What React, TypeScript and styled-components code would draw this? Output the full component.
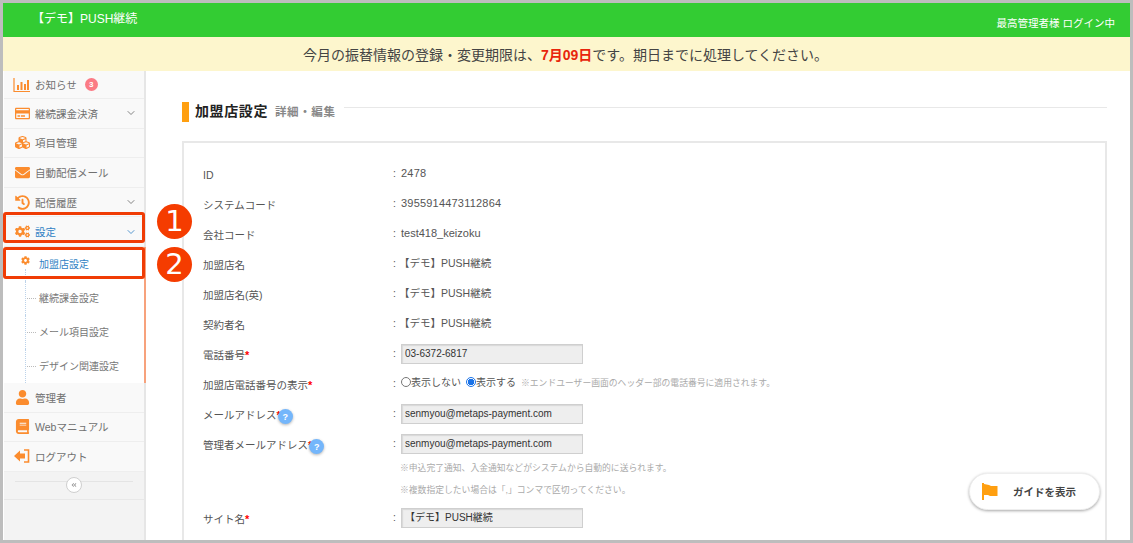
import { ReactNode } from "react";
import styled, { createGlobalStyle } from "styled-components";
import {
  FaCog,
  FaCogs,
  FaCubes,
  FaEnvelope,
  FaHistory,
  FaRegCreditCard,
  FaUser,
  FaBook,
  FaAngleDoubleLeft,
} from "react-icons/fa";
import { ChevronDown } from "lucide-react";

const GlobalStyle = createGlobalStyle`
  html, body {
    margin: 0;
    padding: 0;
    overflow: hidden;
    background: #fff;
    font-family: "Liberation Sans", "Noto Sans CJK JP", sans-serif;
  }
`;

const ChartIcon = () => (
  <svg width="18" height="16" viewBox="0 0 18 16" fill="none">
    <path d="M1 1v13.5h16" stroke="#fb8c2e" strokeWidth="1.2" />
    <path d="M4 8h2v5H4zM7.500 5h2v8h-2zM11 7h2v6h-2zM14 3h2v10h-2z" fill="#fb8c2e" />
  </svg>
);

const LogoutIcon = () => (
  <svg width="16" height="14" viewBox="0 0 16 14">
    <path d="M0 7l6-5.500V4.500h5v5H6v3z" fill="#fb8c2e" />
    <path d="M10 1h4.500v12H10" fill="none" stroke="#fb8c2e" strokeWidth="1.600" />
  </svg>
);

const FlagIcon = () => (
  <svg width="16" height="17" viewBox="0 0 16 17">
    <path d="M0 0h2v17H0z" fill="#ff9f10" />
    <path d="M2 1l5 1 2 1h6.500v10H8l-2-1H2z" fill="#ff9f10" />
  </svg>
);

const Frame = styled.div`
  position: relative;
  width: 1133px;
  height: 543px;
  box-sizing: border-box;
  border: 3px solid #bdbdbd;
  overflow: hidden;
  display: flex;
  flex-direction: column;
  background: #fff;
`;

const Header = styled.header`
  height: 34px;
  flex: none;
  background: #33cc33;
  display: flex;
  align-items: center;
  justify-content: space-between;
  padding: 0 15px 4px 29px;
  box-sizing: border-box;
  color: #fff;
`;

const Brand = styled.div`
  font-size: 12px;
  margin-top: -2px;
`;

const LoginInfo = styled.div`
  font-size: 10.500px;
  padding-top: 8px;
`;

const Notice = styled.div`
  height: 34px;
  flex: none;
  background: #fdf6cd;
  display: flex;
  align-items: center;
  justify-content: center;
  font-size: 14px;
  color: #444;
  padding-right: 2px;
  box-sizing: border-box;
  b {
    color: #e8250c;
    font-weight: 700;
  }
`;

const Body = styled.div`
  flex: 1;
  display: flex;
  min-height: 0;
`;

const Sidebar = styled.nav`
  width: 142px;
  flex: none;
  box-sizing: border-box;
  background: #f3f3f3;
  border-right: 2px solid #e6e6e6;
  margin-left: 1px;
`;

const MenuItem = styled.div<{ $h?: number; $active?: boolean }>`
  height: 29.600px;
  box-sizing: border-box;
  display: flex;
  align-items: center;
  background: #f9f9f9;
  border-bottom: 1px solid #eeeeee;
  font-size: 10.500px;
  color: ${(p) => (p.$active ? "#2f7fc4" : "#707070")};
  position: relative;
  &:first-child {
    height: 28px;
  }
`;

const MenuIcon = styled.span`
  width: 31px;
  flex: none;
  display: flex;
  justify-content: center;
  color: #fb8c2e;
  font-size: 15px;
  padding-left: 5px;
  box-sizing: border-box;
`;

const Chevron = styled.span<{ $active?: boolean }>`
  position: absolute;
  right: 7px;
  top: 50%;
  margin-top: -6px;
  height: 12px;
  color: ${(p) => (p.$active ? "#2f7fc4" : "#666")};
`;

const CountBadge = styled.span`
  width: 13px;
  height: 13px;
  border-radius: 50%;
  background: #fb7b85;
  color: #fff;
  font-size: 8px;
  font-weight: 700;
  margin-left: 8px;
  display: flex;
  align-items: center;
  justify-content: center;
`;

const SubMenu = styled.div`
  background: #fff;
  border-right: 2px solid #f7a27c;
  margin-right: -2px;
`;

const SubItem = styled.div<{ $active?: boolean }>`
  height: 34px;
  box-sizing: border-box;
  display: flex;
  align-items: center;
  padding-left: 35px;
  font-size: 10px;
  color: ${(p) => (p.$active ? "#2f7fc4" : "#777")};
  position: relative;
  &::before {
    content: "";
    position: absolute;
    left: 21px;
    top: ${(p) => (p.$active ? "22px" : "0")};
    bottom: 0;
    border-left: 1px dotted #bcd3ea;
  }
  &::after {
    content: "";
    position: absolute;
    left: 23px;
    width: 9px;
    top: 50%;
    border-top: 1px dotted #bbb;
    display: ${(p) => (p.$active ? "none" : "block")};
  }
`;

const SubIcon = styled.span`
  position: absolute;
  left: 17px;
  top: 9px;
  color: #fb8c2e;
  font-size: 9px;
  line-height: 9px;
`;

const CollapseRow = styled.div`
  height: 28px;
  box-sizing: border-box;
  border-bottom: 1px solid #e8e8e8;
  display: flex;
  align-items: center;
  justify-content: center;
  position: relative;
  &::before {
    content: "";
    position: absolute;
    left: 11px;
    right: 11px;
    top: 9px;
    border-top: 1px solid #e4e4e4;
  }
`;

const CollapseButton = styled.span`
  width: 14px;
  height: 14px;
  border-radius: 50%;
  border: 1px solid #cfcfcf;
  background: #fff;
  color: #999;
  font-size: 6px;
  display: flex;
  align-items: center;
  justify-content: center;
  position: relative;
`;

const Main = styled.main`
  flex: 1;
  min-width: 0;
  padding: 30px 23px 0 36px;
`;

const TitleRow = styled.div`
  display: flex;
  align-items: center;
  height: 21px;
  margin-bottom: 19px;
`;

const TitleMark = styled.span`
  width: 7px;
  height: 20px;
  background: #ff9f10;
  margin-right: 6px;
`;

const Title = styled.h1`
  margin: -3px 0 0;
  font-size: 14px;
  font-weight: 700;
  letter-spacing: 0.600px;
  color: #222;
`;

const SubTitle = styled.span`
  margin: -1px 0 0 7px;
  font-size: 11.500px;
  font-weight: 700;
  letter-spacing: 0.600px;
  color: #888;
  white-space: nowrap;
`;

const TitleLine = styled.span`
  flex: 1;
  height: 1px;
  background: #e8e8e8;
  margin: 0 0 8px 8px;
`;

const Card = styled.section`
  border: 2px solid #e8e8e8;
  border-bottom: none;
  padding: 17px 19px 0;
  height: 400px;
  box-sizing: border-box;
`;

const Row = styled.div`
  display: grid;
  grid-template-columns: 190px 1fr;
  height: 30px;
  font-size: 10.500px;
  color: #555;
`;

const Label = styled.div`
  padding-top: 8px;
  line-height: 14px;
  display: flex;
  align-items: flex-start;
  white-space: nowrap;
`;

const Value = styled.div`
  display: flex;
  align-items: flex-start;
  padding-top: 6px;
  line-height: 14px;
  white-space: nowrap;
`;

const Colon = styled.span`
  width: 8px;
  flex: none;
`;

const Digits = styled.span`
  font-size: 11px;
  letter-spacing: 0.200px;
`;

const Latin = styled.span`
  font-size: 11px;
`;

const BrandName = styled.span`
  margin-left: -2px;
`;

const Required = styled.span`
  color: #f00;
  font-size: 11px;
  font-weight: 700;
`;

const Help = styled.span`
  width: 15px;
  height: 15px;
  border-radius: 50%;
  background: #74b6fb;
  color: #fff;
  font-size: 9px;
  font-weight: 700;
  display: flex;
  align-items: center;
  justify-content: center;
  box-shadow: 0 1px 3px rgba(0, 0, 0, 0.3);
  margin: 1px 0 0 -3px;
`;

const TextInput = styled.div`
  width: 182px;
  height: 20px;
  box-sizing: border-box;
  margin: -2px 0 0 0;
  border: 1px solid #cfcfcf;
  box-shadow: inset 1px 1px 1px #d8d8d8;
  background: #eeeeee;
  padding: 0 3px;
  font-size: 10px;
  line-height: 18px;
  color: #333;
`;

const Radio = styled.span<{ $on?: boolean }>`
  width: 10px;
  height: 10px;
  flex: none;
  box-sizing: border-box;
  border-radius: 50%;
  border: ${(p) => (p.$on ? "1px solid #1a73e8" : "1px solid #777")};
  background: ${(p) => (p.$on ? "radial-gradient(circle, #1a73e8 0 3px, #fff 3.500px)" : "#fff")};
  margin: 1px 0 0 0;
`;

const RadioText = styled.span`
  font-size: 10px;
  margin-right: 5px;
`;

const Hint = styled.span`
  font-size: 8.800px;
  color: #aaa;
`;

const HintRow = styled.div`
  margin-left: 197px;
  padding-top: 1px;
  height: 21px;
  font-size: 8.800px;
  color: #aaa;
  line-height: 14px;
`;

const GuideButton = styled.div`
  position: absolute;
  left: 966px;
  top: 470px;
  width: 131px;
  height: 37px;
  box-sizing: border-box;
  border-radius: 19px;
  background: #fff;
  border: 1px solid #eee;
  box-shadow: 0 1px 3px rgba(0, 0, 0, 0.35);
  display: flex;
  align-items: center;
  padding-left: 12px;
`;

const GuideLabel = styled.span`
  color: #444;
  font-size: 10.500px;
  font-weight: 700;
  margin-left: 15px;
`;

const Highlight = styled.div<{ $top: number; $h: number }>`
  position: absolute;
  left: 0;
  top: ${(p) => p.$top}px;
  width: 142px;
  height: ${(p) => p.$h}px;
  box-sizing: border-box;
  border: 3px solid #f03c05;
  border-radius: 3px;
`;

const StepBadge = styled.div<{ $top: number }>`
  position: absolute;
  left: 154px;
  top: ${(p) => p.$top}px;
  width: 35px;
  height: 35px;
  border-radius: 50%;
  background: #f53c00;
  color: #fff;
  font-size: 29px;
  line-height: 35px;
  text-align: center;
  font-family: "DejaVu Sans", sans-serif;
`;

type Nav = { icon: ReactNode; text: string; arrow?: boolean; badge?: string; active?: boolean };

const topNav: Nav[] = [
  { icon: <ChartIcon />, text: "お知らせ", badge: "3" },
  { icon: <FaRegCreditCard />, text: "継続課金決済", arrow: true },
  { icon: <FaCubes />, text: "項目管理" },
  { icon: <FaEnvelope />, text: "自動配信メール" },
  { icon: <FaHistory />, text: "配信履歴", arrow: true },
  { icon: <FaCogs />, text: "設定", arrow: true, active: true },
];

const bottomNav: Nav[] = [
  { icon: <FaUser />, text: "管理者" },
  { icon: <FaBook />, text: "Webマニュアル" },
  { icon: <LogoutIcon />, text: "ログアウト" },
];

const subNav = ["加盟店設定", "継続課金設定", "メール項目設定", "デザイン関連設定"];

const renderNav = (n: Nav) => (
  <MenuItem key={n.text} $active={n.active}>
    <MenuIcon>{n.icon}</MenuIcon>
    {n.text}
    {n.badge && <CountBadge>{n.badge}</CountBadge>}
    {n.arrow && (
      <Chevron $active={n.active}>
        <ChevronDown size={12} strokeWidth={1.6} />
      </Chevron>
    )}
  </MenuItem>
);

const plainRows: [string, ReactNode][] = [
  ["ID", <Digits>2478</Digits>],
  ["システムコード", <Digits>3955914473112864</Digits>],
  ["会社コード", <Latin>test418_keizoku</Latin>],
  ["加盟店名", <BrandName>【デモ】PUSH継続</BrandName>],
  ["加盟店名(英)", <BrandName>【デモ】PUSH継続</BrandName>],
  ["契約者名", <BrandName>【デモ】PUSH継続</BrandName>],
];

export default function App() {
  return (
    <Frame>
      <GlobalStyle />
      <Header>
        <Brand>【デモ】PUSH継続</Brand>
        <LoginInfo>最高管理者様 ログイン中</LoginInfo>
      </Header>
      <Notice>
        <span>
          今月の振替情報の登録・変更期限は、<b>7月09日</b>です。期日までに処理してください。
        </span>
      </Notice>
      <Body>
        <Sidebar>
          <div>{topNav.map(renderNav)}</div>
          <SubMenu>
            {subNav.map((s, i) => (
              <SubItem key={s} $active={i === 0}>
                {i === 0 && (
                  <SubIcon>
                    <FaCog />
                  </SubIcon>
                )}
                {s}
              </SubItem>
            ))}
          </SubMenu>
          {bottomNav.map(renderNav)}
          <CollapseRow>
            <CollapseButton>
              <FaAngleDoubleLeft />
            </CollapseButton>
          </CollapseRow>
        </Sidebar>
        <Main>
          <TitleRow>
            <TitleMark />
            <Title>加盟店設定</Title>
            <SubTitle>詳細・編集</SubTitle>
            <TitleLine />
          </TitleRow>
          <Card>
            {plainRows.map(([label, value]) => (
              <Row key={label}>
                <Label>{label}</Label>
                <Value>
                  <Colon>:</Colon>
                  {value}
                </Value>
              </Row>
            ))}
            <Row>
              <Label>
                電話番号<Required>*</Required>
              </Label>
              <Value>
                <Colon>:</Colon>
                <TextInput>03-6372-6817</TextInput>
              </Value>
            </Row>
            <Row>
              <Label>
                加盟店電話番号の表示<Required>*</Required>
              </Label>
              <Value>
                <Colon>:</Colon>
                <Radio />
                <RadioText>表示しない</RadioText>
                <Radio $on />
                <RadioText>表示する</RadioText>
                <Hint>※エンドユーザー画面のヘッダー部の電話番号に適用されます。</Hint>
              </Value>
            </Row>
            <Row>
              <Label>
                メールアドレス<Required>*</Required>
                <Help>?</Help>
              </Label>
              <Value>
                <Colon>:</Colon>
                <TextInput>senmyou@metaps-payment.com</TextInput>
              </Value>
            </Row>
            <Row>
              <Label>
                管理者メールアドレス<Required>*</Required>
                <Help>?</Help>
              </Label>
              <Value>
                <Colon>:</Colon>
                <TextInput>senmyou@metaps-payment.com</TextInput>
              </Value>
            </Row>
            <HintRow>※申込完了通知、入金通知などがシステムから自動的に送られます。</HintRow>
            <HintRow>※複数指定したい場合は「,」コンマで区切ってください。</HintRow>
            <Row>
              <Label>
                サイト名<Required>*</Required>
              </Label>
              <Value>
                <Colon>:</Colon>
                <TextInput>【デモ】PUSH継続</TextInput>
              </Value>
            </Row>
          </Card>
        </Main>
      </Body>
      <Highlight $top={209} $h={31} />
      <Highlight $top={244} $h={32} />
      <StepBadge $top={201}>1</StepBadge>
      <StepBadge $top={244}>2</StepBadge>
      <GuideButton>
        <FlagIcon />
        <GuideLabel>ガイドを表示</GuideLabel>
      </GuideButton>
    </Frame>
  );
}
